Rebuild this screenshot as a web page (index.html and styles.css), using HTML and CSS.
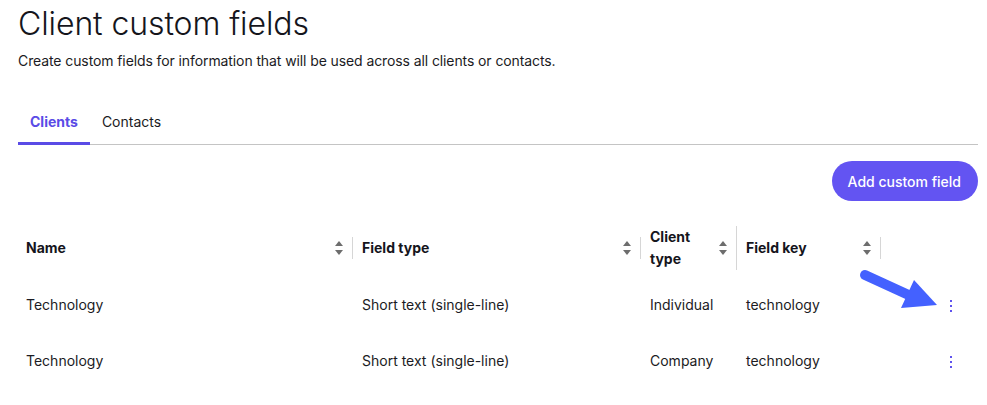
FILE: index.html
```html
<!DOCTYPE html>
<html>
<head>
<meta charset="utf-8">
<link rel="stylesheet" href="styles.css">
</head>
<body>
<div class="page">
  <h1 class="title">Client custom fields</h1>
  <p class="subtitle">Create custom fields for information that will be used across all clients or contacts.</p>
  <nav class="tabs">
    <span class="tab active">Clients</span>
    <span class="tab">Contacts</span>
  </nav>
  <div class="toolbar">
    <button class="btn-primary">Add custom field</button>
  </div>
  <div class="table-wrap">
    <table class="fields">
      <colgroup>
        <col class="c-name"><col class="c-type"><col class="c-ctype"><col class="c-key"><col class="c-act">
      </colgroup>
      <thead>
        <tr>
          <th><div class="th-in"><span>Name</span><span class="sort"></span></div></th>
          <th><div class="th-in"><span>Field type</span><span class="sort"></span></div></th>
          <th><div class="th-in"><span>Client<br>type</span><span class="sort"></span></div></th>
          <th><div class="th-in"><span>Field key</span><span class="sort"></span></div></th>
          <th class="th-act"></th>
        </tr>
      </thead>
      <tbody>
        <tr>
          <td>Technology</td>
          <td>Short text (single-line)</td>
          <td>Individual</td>
          <td>technology</td>
          <td class="act"><span class="kebab"><i></i><i></i><i></i></span></td>
        </tr>
        <tr>
          <td>Technology</td>
          <td>Short text (single-line)</td>
          <td>Company</td>
          <td>technology</td>
          <td class="act"><span class="kebab"><i></i><i></i><i></i></span></td>
        </tr>
      </tbody>
    </table>
    <svg class="arrow" width="100" height="60" viewBox="0 0 100 60">
      <line x1="10" y1="12" x2="58" y2="34" stroke="#4461ff" stroke-width="10" stroke-linecap="round"/>
      <polygon points="59,17 82,42 46,45" fill="#4461ff"/>
    </svg>
  </div>
</div>
</body>
</html>
```

FILE: styles.css
```css
* { box-sizing: border-box; }
html, body { margin: 0; padding: 0; background: #fff; }
body {
  font-family: Inter, "Noto Sans", "Liberation Sans", sans-serif;
  color: #1b1b23;
}
.page {
  padding: 0 9px 0 18px;
}
.title {
  margin: 0;
  padding-top: 4px;
  font-size: 32px;
  font-weight: 300;
  line-height: 40px;
  letter-spacing: -0.1px;
  color: #15151c;
}
.subtitle {
  margin: 7px 0 0;
  font-size: 14px;
  line-height: 20px;
  letter-spacing: -0.1px;
  color: #1b1b23;
}
.tabs {
  display: flex;
  margin-top: 29px;
  border-bottom: 1px solid #c4c4c4;
}
.tab {
  font-size: 14px;
  line-height: 20px;
  padding: 12px 12px 12px 12px;
  color: #1b1b23;
  margin-bottom: -1px;
}
.tab.active {
  color: #5a4be6;
  font-weight: 700;
  border-bottom: 3px solid #5a4be6;
  padding-bottom: 10px;
}
.toolbar {
  display: flex;
  justify-content: flex-end;
  margin-top: 16px;
}
.btn-primary {
  font-family: inherit;
  font-size: 14px;
  font-weight: 500;
  color: #fff;
  background: #6354f2;
  border: 0;
  border-radius: 20px;
  height: 40px;
  padding: 0 17px 0 16px;
}
.table-wrap {
  position: relative;
  margin-top: 17px;
}
.fields {
  width: 960px;
  border-collapse: collapse;
  table-layout: fixed;
  font-size: 14px;
}
.c-name { width: 335px; }
.c-type { width: 288px; }
.c-ctype { width: 96px; }
.c-key { width: 144px; }
.c-act { width: 97px; }
.fields th {
  height: 59px;
  padding: 0;
  text-align: left;
  font-weight: 700;
  line-height: 22px;
  color: #15151c;
}
.th-in {
  display: flex;
  align-items: center;
  justify-content: space-between;
  padding: 0 8px 0 8px;
  border-right: 1px solid #d6d6d6;
  min-height: 22px;
}
.fields th:nth-child(2) .th-in,
.fields th:nth-child(3) .th-in,
.fields th:nth-child(4) .th-in { padding-left: 9px; }
.sort {
  width: 9px;
  height: 14px;
  position: relative;
  flex: none;
}
.sort::before, .sort::after {
  content: "";
  position: absolute;
  left: 0;
  border-left: 4.5px solid transparent;
  border-right: 4.5px solid transparent;
}
.sort::before { top: 0; border-bottom: 5px solid #6d6d6d; }
.sort::after { bottom: 0; border-top: 5px solid #6d6d6d; }
.fields td {
  height: 56px;
  padding: 0 8px 0 9px;
  line-height: 20px;
  color: #1b1b23;
  white-space: nowrap;
}
.fields td:first-child { padding-left: 8px; }
.fields td.act {
  text-align: right;
  padding-right: 26px;
}
.kebab {
  display: inline-flex;
  flex-direction: column;
  gap: 3px;
  vertical-align: middle;
}
.kebab i {
  display: block;
  width: 2px;
  height: 2px;
  background: #5f52ee;
}
.arrow {
  position: absolute;
  left: 837px;
  top: 45px;
}
```
